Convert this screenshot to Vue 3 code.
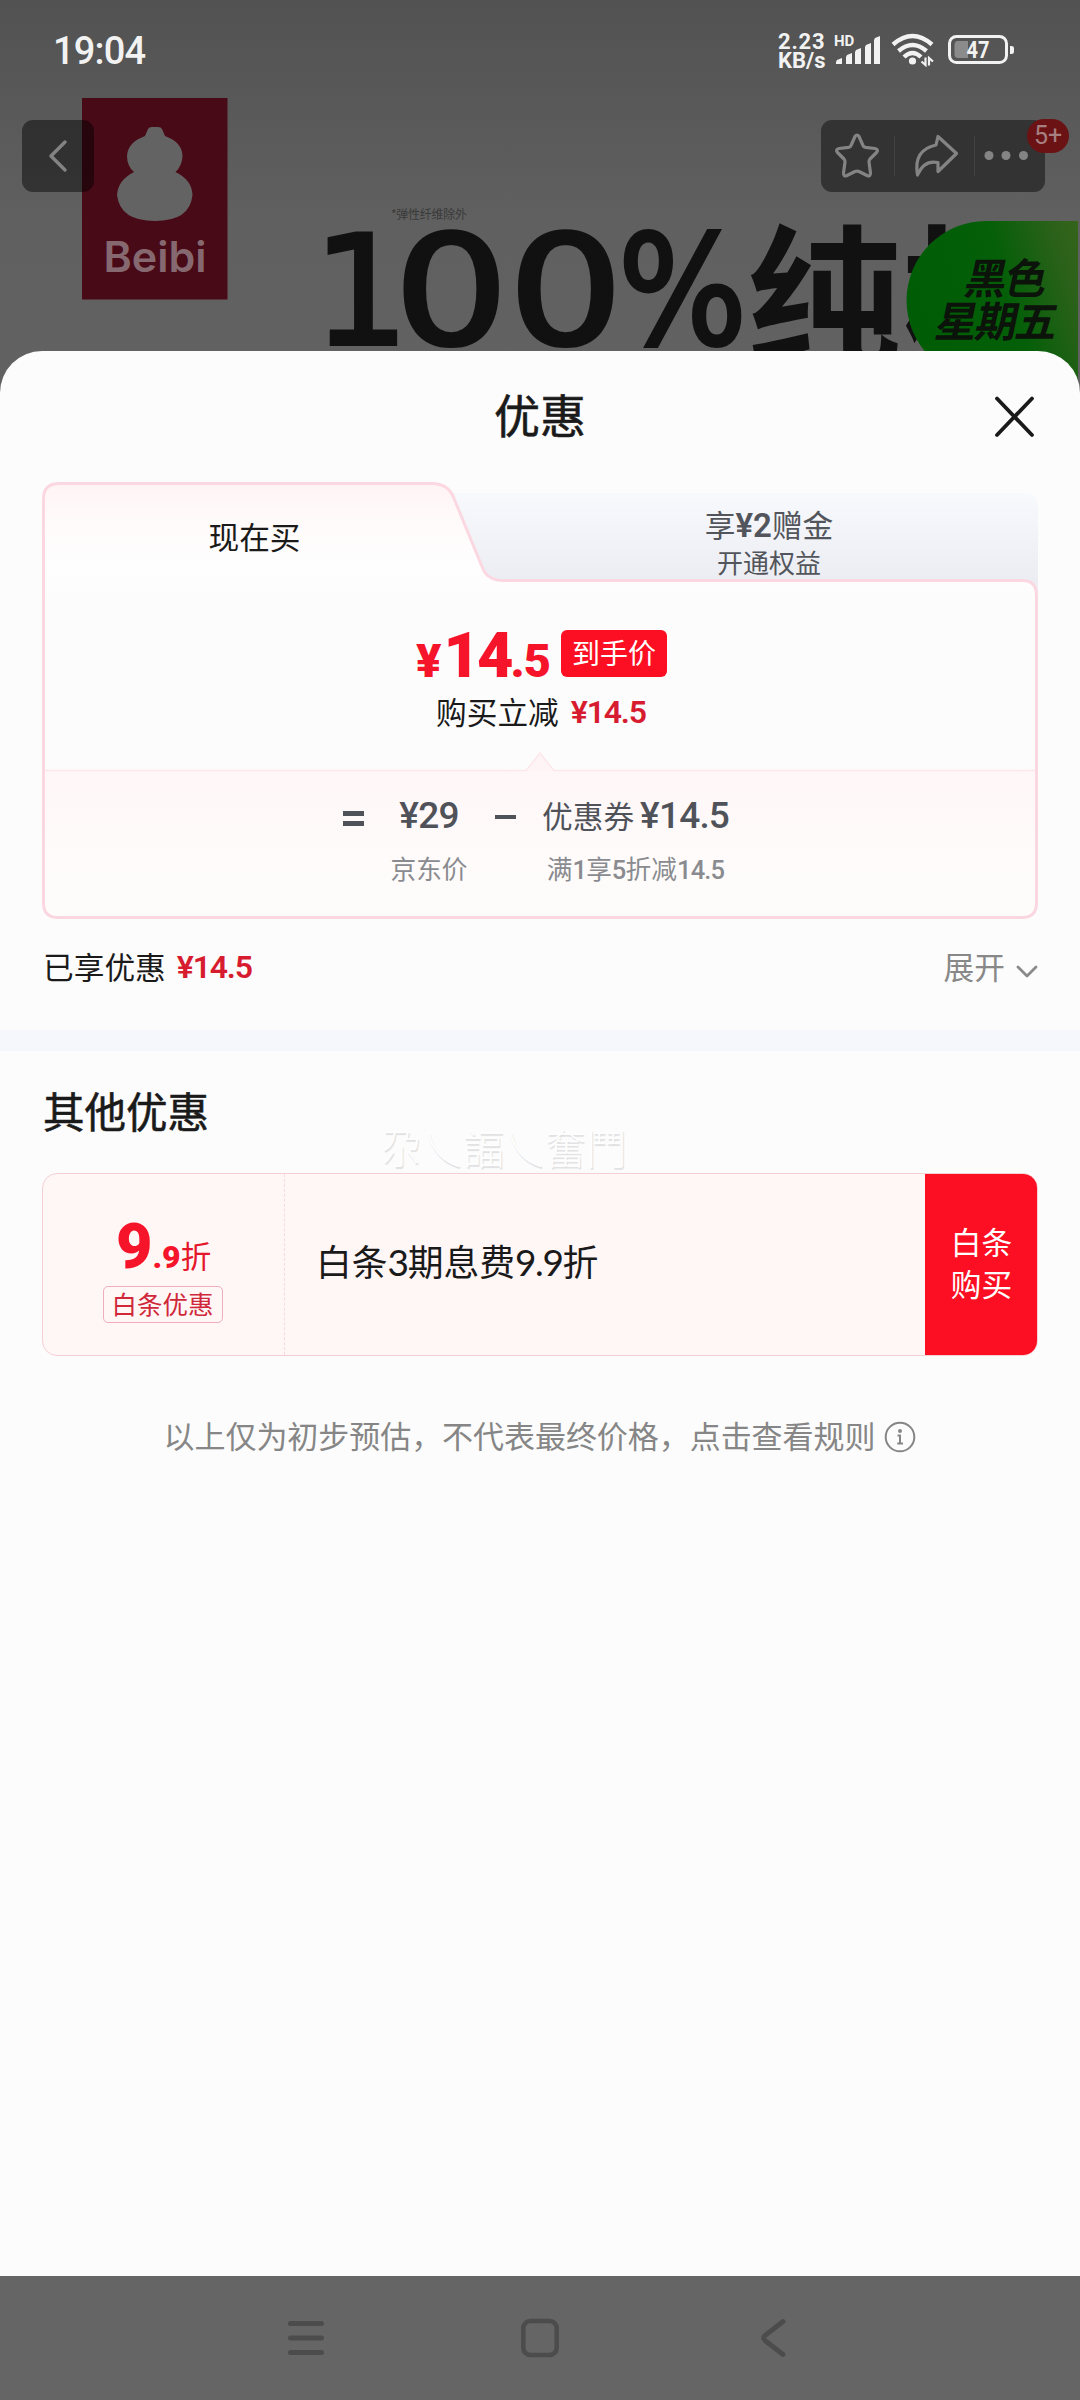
<script setup>
const bars = [
  { x: 0, h: 6 },
  { x: 10, h: 11 },
  { x: 19, h: 16 },
  { x: 29, h: 21 },
  { x: 38, h: 28 },
]
</script>

<template>
  <div class="screen">
    <header class="hero">
      <svg class="art" width="1080" height="400" viewBox="0 0 1080 400" aria-hidden="true">
        <defs>
          <linearGradient id="shade" x1="0" y1="0" x2="0" y2="1">
            <stop offset="0" stop-color="#525252" />
            <stop offset="0.55" stop-color="#606060" />
            <stop offset="1" stop-color="#626262" />
          </linearGradient>
          <linearGradient id="leaf" x1="0" y1="0.3" x2="1" y2="0">
            <stop offset="0" stop-color="#005d05" />
            <stop offset="0.5" stop-color="#045f08" />
            <stop offset="0.85" stop-color="#2b611a" />
            <stop offset="1" stop-color="#36641b" />
          </linearGradient>
        </defs>
        <rect width="1080" height="400" fill="url(#shade)" />
        <rect x="82" y="98" width="145.500" height="201.500" fill="#490a17" />
        <path fill="#636363" d="M148 129Q149 127 152 127H158Q161 127 162 129L165 136Q182 142 182.500 156Q182 166 175.500 172Q192 180 192.500 195Q190 221 155 221Q120 221 117 195Q118 180 134 172Q127 166 127 156Q128 142 145 136Z" />
        <text class="brand" x="103.500" y="272" textLength="103" lengthAdjust="spacingAndGlyphs">Beibi</text>
        <text class="tiny" x="391" y="219" textLength="76">*弹性纤维除外</text>
        <text class="huge" x="313" y="344">1</text>
        <text class="huge" x="394" y="344" textLength="229" lengthAdjust="spacingAndGlyphs">00</text>
        <text class="huge pct" x="618" y="344" textLength="129" lengthAdjust="spacingAndGlyphs">%</text>
        <text class="hanzi" x="747" y="356">纯棉</text>
        <path d="M986 221H1078V380H986A79.500 79.500 0 0 1 986 221Z" fill="url(#leaf)" />
        <g class="friday" transform="skewX(-12)">
          <text x="1025" y="294" textLength="82">黑色</text>
          <text x="1005" y="337" textLength="122">星期五</text>
        </g>
      </svg>

      <div class="status">
        <span class="time">19:04</span>
        <div class="sys">
          <div class="speed"><span>2.23</span><span>KB/s</span></div>
          <svg class="signal" width="48" height="32" viewBox="0 0 48 32">
            <text x="-1" y="13" class="hd">HD</text>
            <path v-for="b in bars" :key="b.x" :d="`M${b.x + 2} ${31 - b.h + 2}L${b.x + 7} ${31 - b.h}V31H${b.x + 1}V${31 - b.h + 4}Z`" fill="#f2f2f2" />
          </svg>
          <svg class="wifi" width="44" height="34" viewBox="0 0 44 34" fill="none" stroke="#f2f2f2" stroke-width="4.400">
            <path d="M2 11.500Q21.500 -5.500 41 11.500" />
            <path d="M7.500 18Q21.500 6 35.500 18" />
            <path d="M13 24Q21.500 16 30 24" />
            <circle cx="21.500" cy="28" r="3.600" fill="#f2f2f2" stroke="none" />
            <path stroke-width="2.200" d="M34.500 24.500V32L30.500 28.500M38 32.500V25L42 28.500" />
          </svg>
          <svg class="battery" width="67" height="30" viewBox="0 0 67 30">
            <rect x="1.500" y="1.500" width="57" height="26" rx="7" fill="none" stroke="#f2f2f2" stroke-width="3" />
            <path d="M10 6H20V23H10Q6.500 23 6.500 19V10Q6.500 6 10 6Z" fill="#8b8b8b" />
            <path d="M62 11H63.500Q66 11 66 13V17Q66 19 63.500 19H62Z" fill="#f2f2f2" />
            <text x="18.500" y="22.500" class="pct47" textLength="23" lengthAdjust="spacingAndGlyphs">47</text>
          </svg>
        </div>
      </div>

      <div class="tools">
        <div class="back">
          <svg width="72" height="72" viewBox="0 0 72 72"><path d="M43 22L29 36L43 50" fill="none" stroke="#838383" stroke-width="3.400" stroke-linecap="round" stroke-linejoin="round" /></svg>
        </div>
        <div class="actions">
          <svg width="224" height="72" viewBox="0 0 224 72" fill="none" stroke="#848484" stroke-width="3.200" stroke-linejoin="round" stroke-linecap="round">
            <path d="M34 16.500Q36 13.500 38 16.500L42 25.500Q42.500 27 44.500 27.300L54 28.500Q58 29.500 55.500 32.500L49 39Q47.800 40.500 48 42L49.500 53Q49.500 57 46 55.500L38 51.500Q36 50.600 34 51.500L26 55.500Q22.500 57 22.500 53L24 42Q24.200 40.500 23 39L16.500 32.500Q14 29.500 18 28.500L27.500 27.300Q29.500 27 30 25.500Z" />
            <path d="M117 16.500L135.500 33.500L117 51.500V42.500Q103 39.500 96.500 55Q92 30 115 25Z" />
            <path d="M73.500 16V56M153.500 16V56" stroke="#414141" stroke-width="1" />
            <g fill="#848484" stroke="none"><circle cx="168" cy="35.500" r="4.500" /><circle cx="185" cy="35.500" r="4.500" /><circle cx="202.500" cy="35.500" r="4.500" /></g>
          </svg>
          <span class="bubble">5+</span>
        </div>
      </div>
    </header>

    <main class="sheet">
      <div class="title">
        <h1>优惠</h1>
        <svg class="close" width="44" height="44" viewBox="0 0 44 44"><path d="M4 3.500L39 40M39 3.500L4 40" stroke="#1a1a1a" stroke-width="3.800" stroke-linecap="round" /></svg>
      </div>

      <section class="card">
        <svg class="frame" width="996" height="437" viewBox="0 0 996 437" aria-hidden="true">
          <defs>
            <linearGradient id="grey" x1="0" y1="0" x2="0" y2="1">
              <stop offset="0" stop-color="#f7f9fd" />
              <stop offset="0.85" stop-color="#ebedf2" />
              <stop offset="1" stop-color="#f3f4f7" />
            </linearGradient>
            <linearGradient id="blush" gradientUnits="userSpaceOnUse" x1="0" y1="0" x2="0" y2="120">
              <stop offset="0" stop-color="#fff3f4" />
              <stop offset="0.3" stop-color="#fffafa" />
              <stop offset="0.7" stop-color="#fefefe" />
              <stop offset="1" stop-color="#fcfcfc" />
            </linearGradient>
            <linearGradient id="rose" x1="0" y1="0" x2="0" y2="1">
              <stop offset="0" stop-color="#fff6f8" />
              <stop offset="0.6" stop-color="#fefbfa" />
              <stop offset="1" stop-color="#fdfcfa" />
            </linearGradient>
          </defs>
          <path d="M400 11H982Q996 11 996 25V115H400Z" fill="url(#grey)" />
          <path d="M1.500 17Q1.500 1.500 17 1.500H390Q405 1.500 411 14L441 87Q446 98.500 462 98.500H980Q994.500 98.500 994.500 113V421Q994.500 435.500 980 435.500H16Q1.500 435.500 1.500 421Z" fill="url(#blush)" />
          <path d="M2 288H994V421Q994 435 980 435H16Q2 435 2 421Z" fill="url(#rose)" />
          <path d="M2 288.500H484L498 271L512 288.500H994" fill="#fef4f6" stroke="#fbe7ec" stroke-width="1.500" />
          <path d="M1.500 17Q1.500 1.500 17 1.500H390Q405 1.500 411 14L441 87Q446 98.500 462 98.500H980Q994.500 98.500 994.500 113V421Q994.500 435.500 980 435.500H16Q1.500 435.500 1.500 421Z" fill="none" stroke="#fbd8e1" stroke-width="3" />
        </svg>
        <div class="tabs">
          <div class="tab now">现在买</div>
          <div class="tab later"><span class="gift">享<b>¥2</b>赠金</span><span class="open">开通权益</span></div>
        </div>
        <div class="price">
          <span class="amount"><i>¥</i><b>14</b><i class="dec">.5</i></span>
          <span class="tag">到手价</span>
        </div>
        <div class="cut"><span>购买立减</span><b class="num">¥14.5</b></div>
        <div class="formula">
          <span class="eq"></span>
          <div class="term jd"><div class="top"><b>¥29</b></div><div class="sub">京东价</div></div>
          <span class="minus"></span>
          <div class="term coupon"><div class="top">优惠券<b>¥14.5</b></div><div class="sub">满<b>1</b>享<b>5</b>折减<b>14.5</b></div></div>
        </div>
      </section>

      <div class="enjoyed">
        <span>已享优惠</span><b class="num">¥14.5</b>
        <span class="more">展开</span>
        <svg width="22" height="14" viewBox="0 0 22 14"><path d="M2 2L11 11L20 2" fill="none" stroke="#8a8a8a" stroke-width="2.800" stroke-linecap="round" stroke-linejoin="round" /></svg>
      </div>

      <div class="band"></div>

      <h2>其他优惠<span class="mark">尕乀諨乀奮鬥</span></h2>

      <section class="ticket">
        <div class="rate">
          <div class="off"><b>9</b><i>.9</i><span>折</span></div>
          <div class="label">白条优惠</div>
        </div>
        <div class="desc">白条<b>3</b>期息费<b>9.9</b>折</div>
        <div class="buy"><span>白条</span><span>购买</span></div>
      </section>

      <div class="note">
        <span>以上仅为初步预估，不代表最终价格，点击查看规则</span>
        <svg width="32" height="32" viewBox="0 0 32 32" fill="none" stroke="#868686" stroke-width="2">
          <circle cx="16" cy="16" r="14.300" />
          <circle cx="16" cy="10" r="2" fill="#868686" stroke="none" />
          <path d="M13.500 14.500H16V22.500M13.200 22.600H19" />
        </svg>
      </div>
    </main>

    <nav class="keys">
      <svg width="40" height="42" viewBox="0 0 40 42" stroke="#4c4c4c" stroke-width="5" stroke-linecap="round"><path d="M4.500 6.500H35.500M4.500 21H35.500M4.500 35.500H35.500" /></svg>
      <svg width="40" height="42" viewBox="0 0 40 42" fill="none" stroke="#4c4c4c" stroke-width="4.600"><rect x="3.300" y="4" width="33.400" height="34" rx="7" /></svg>
      <svg width="40" height="42" viewBox="0 0 40 42" fill="none" stroke="#4c4c4c" stroke-width="4.800" stroke-linecap="round" stroke-linejoin="round"><path d="M29 4.500L11 18.500Q8.500 21 11 23.500L29 37.500" /></svg>
    </nav>
  </div>
</template>

<style>
body {
  margin: 0;
  background: #656565;
}
</style>

<style scoped>
.screen {
  width: 1080px;
  height: 2400px;
  overflow: hidden;
  display: flex;
  flex-direction: column;
  font-family: "Noto Sans CJK SC", sans-serif;
  color: #1a1a1a;
}
svg {
  display: block;
  flex: none;
}
b,
i {
  font-family: Roboto, "Noto Sans CJK SC", sans-serif;
  font-style: normal;
}

/* dimmed product page */
.hero {
  position: relative;
  height: 400px;
  flex: none;
}
.art {
  position: absolute;
  left: 0;
  top: 0;
}
.brand {
  font: 600 42px Inter, sans-serif;
  fill: #866870;
}
.tiny {
  font: 12px "Noto Sans CJK SC", sans-serif;
  fill: #3a3a3a;
}
.huge {
  font: 151px "DejaVu Sans", sans-serif;
  fill: #111;
  stroke: #111;
  stroke-width: 4px;
}
.hanzi {
  font: 700 154px "Noto Sans CJK SC", sans-serif;
  fill: #111;
}
.friday {
  font: 700 42px "Noto Sans CJK SC", sans-serif;
  fill: #0b130a;
}
.status {
  position: relative;
  display: flex;
  justify-content: space-between;
  height: 120px;
  padding: 0 65px 0 53px;
  box-sizing: border-box;
  color: #f2f2f2;
}
.time {
  font: 500 38px/44px Roboto, sans-serif;
  letter-spacing: -0.8px;
  padding-top: 29px;
}
.sys {
  display: flex;
}
.speed {
  display: flex;
  flex-direction: column;
  width: 57px;
  padding-top: 32px;
  font: 700 22px/19px Roboto, sans-serif;
}
.speed span:first-child {
  letter-spacing: 0.8px;
}
.signal {
  overflow: visible;
  margin: 33px 8px 0 0;
}
.hd {
  font: 700 15px Roboto, sans-serif;
  fill: #f2f2f2;
}
.wifi {
  margin: 33px 13px 0 0;
}
.battery {
  margin-top: 35px;
}
.pct47 {
  font: 700 23px Roboto, sans-serif;
  fill: #f2f2f2;
}
.tools {
  position: relative;
  display: flex;
  justify-content: space-between;
  padding: 0 35px 0 22px;
}
.back,
.actions {
  height: 72px;
  border-radius: 11px;
  background: #333;
}
.back {
  width: 72px;
  background: rgba(0, 0, 0, 0.46);
}
.actions {
  position: relative;
  width: 224px;
}
.bubble {
  position: absolute;
  left: 206px;
  top: -1px;
  width: 42px;
  height: 34px;
  border-radius: 17px;
  background: #6a1214;
  color: #a67f80;
  text-align: center;
  font: 25px/34px Roboto, sans-serif;
}

/* bottom sheet */
.sheet {
  position: relative;
  margin-top: -49px;
  height: 1925px;
  flex: none;
  background: #fcfcfc;
  border-radius: 42px 42px 0 0;
}
.title {
  height: 131px;
  display: grid;
  grid-template-columns: 1fr auto 1fr;
  align-items: start;
}
h1 {
  grid-column: 2;
  margin: 29px 0 0;
  font-size: 46px;
  line-height: 66px;
  font-weight: 400;
  -webkit-text-stroke: 0.6px #1a1a1a;
}
.close {
  justify-self: end;
  margin: 44px 43px 0 0;
}
.card {
  position: relative;
  width: 996px;
  height: 437px;
  margin: 0 42px;
}
.frame {
  position: absolute;
  left: 0;
  top: 0;
}
.tabs,
.price,
.cut,
.formula {
  position: relative;
  display: flex;
}
.tabs {
  height: 98px;
}
.tab {
  flex: none;
}
.now {
  width: 425px;
  text-align: center;
  font-size: 30.700px;
  line-height: 108px;
}
.later {
  width: 571px;
  padding-left: 33px;
  box-sizing: border-box;
  display: flex;
  flex-direction: column;
  align-items: center;
  color: #53555c;
}
.gift {
  margin-top: 24px;
  font-size: 30.700px;
  line-height: 36px;
}
.gift b {
  font-size: 33px;
  font-weight: 600;
}
.open {
  font-size: 26px;
  line-height: 38px;
  margin-top: -1px;
}
.price {
  height: 107px;
  padding-left: 374px;
}
.amount {
  width: 145px;
  margin-top: 40px;
  height: 66px;
  line-height: 72px;
  white-space: nowrap;
  color: #f5142a;
}
.amount b {
  font-size: 63px;
  font-weight: 900;
  letter-spacing: -3px;
  margin-left: 2px;
}
.amount i {
  font-size: 47px;
  font-weight: 900;
}
.amount .dec {
  letter-spacing: -1px;
}
.tag {
  width: 106px;
  height: 47px;
  margin-top: 50px;
  border-radius: 6px;
  background: #fc0f22;
  color: #fff;
  text-align: center;
  font-size: 28px;
  line-height: 44px;
}
.cut {
  height: 81px;
  padding: 2px 0 0 394px;
  font-size: 30.700px;
  line-height: 44px;
  gap: 12px;
}
.cut .num {
  line-height: 47px;
}
.num {
  color: #d71c30;
  font-size: 32px;
  font-weight: 600;
  letter-spacing: -1.2px;
}
.formula {
  height: 149px;
  color: #505259;
}
.eq {
  width: 21px;
  height: 5px;
  margin: 41px 0 0 301px;
  border-top: 5px solid #505259;
  border-bottom: 5px solid #505259;
}
.minus {
  width: 21px;
  height: 4px;
  background: #505259;
  margin-top: 45px;
}
.term {
  display: flex;
  flex-direction: column;
  align-items: center;
}
.jd {
  width: 132px;
  margin-left: -1px;
}
.top {
  height: 59px;
  margin-top: 21px;
  line-height: 48px;
  font-size: 30.700px;
  white-space: nowrap;
}
.top b {
  font-size: 37px;
  font-weight: 500;
  letter-spacing: -0.8px;
}
.coupon {
  margin-left: 26px;
}
.coupon .top b {
  margin-left: 6px;
}
.sub {
  line-height: 36px;
  font-size: 25.700px;
  color: #8a8b90;
  white-space: nowrap;
}
.sub b {
  font-size: 25.500px;
  font-weight: 500;
  letter-spacing: -0.8px;
}
.enjoyed {
  display: flex;
  align-items: center;
  height: 111px;
  padding: 0 42px 18px 43px;
  box-sizing: border-box;
  font-size: 30.700px;
}
.enjoyed .num {
  margin: 3px 0 0 11px;
}
.more {
  margin-left: auto;
  color: #888;
}
.enjoyed svg {
  margin: 12px 0 0 11px;
}
.band {
  height: 21px;
  background: #f5f7fc;
}
h2 {
  display: flex;
  height: 122px;
  margin: 0;
  padding: 29px 0 0 43px;
  box-sizing: border-box;
  font-size: 41.500px;
  line-height: 60px;
  font-weight: 400;
  -webkit-text-stroke: 0.6px #1a1a1a;
}
.mark {
  margin: 36px 0 0 172px;
  font-size: 41px;
  font-weight: 300;
  -webkit-text-stroke: 0;
  color: #fefefe;
  text-shadow: 1px 2px 1px #dfdfe1;
}
.ticket {
  display: flex;
  width: 996px;
  height: 183px;
  box-sizing: border-box;
  margin: 0 42px;
  border: 1px solid #f4d0d5;
  border-radius: 15px;
  background: #fff6f6;
  overflow: hidden;
}
.rate {
  width: 241px;
  border-right: 1px dashed #f6dcdf;
  display: flex;
  flex-direction: column;
  align-items: center;
}
.off {
  display: flex;
  align-items: baseline;
  height: 112px;
  line-height: 72px;
  box-sizing: border-box;
  padding-top: 37px;
  color: #f5142a;
}
.off b {
  font-size: 63px;
  font-weight: 900;
}
.off i {
  font-size: 32px;
  font-weight: 900;
}
.off span {
  font-size: 30.500px;
  color: #e5152a;
}
.label {
  width: 118px;
  height: 35px;
  margin-right: 2px;
  border: 1px solid #efaebd;
  border-radius: 5px;
  text-align: center;
  font-size: 25.500px;
  line-height: 32px;
  color: #d0283a;
}
.desc {
  flex: 1;
  padding-left: 31px;
  font-size: 35.800px;
  line-height: 172px;
}
.desc b {
  font-family: Lato, sans-serif;
  font-size: 37px;
  font-weight: 400;
  letter-spacing: -1.4px;
}
.buy {
  width: 113px;
  margin: -1px -1px -1px 0;
  background: #fc0f22;
  color: #fff;
  display: flex;
  flex-direction: column;
  justify-content: center;
  align-items: center;
  font-size: 30.700px;
  line-height: 42px;
  padding-bottom: 5px;
  box-sizing: border-box;
}
.note {
  display: flex;
  justify-content: center;
  align-items: center;
  gap: 9px;
  height: 44px;
  margin-top: 57px;
  font-size: 31px;
  line-height: 40px;
  letter-spacing: -0.05px;
  color: #868686;
}
.note svg {
  margin-top: 3px;
}

/* system navigation */
.keys {
  flex: 1;
  display: flex;
  justify-content: center;
  align-items: center;
  gap: 194px;
  background: #656565;
}
</style>
